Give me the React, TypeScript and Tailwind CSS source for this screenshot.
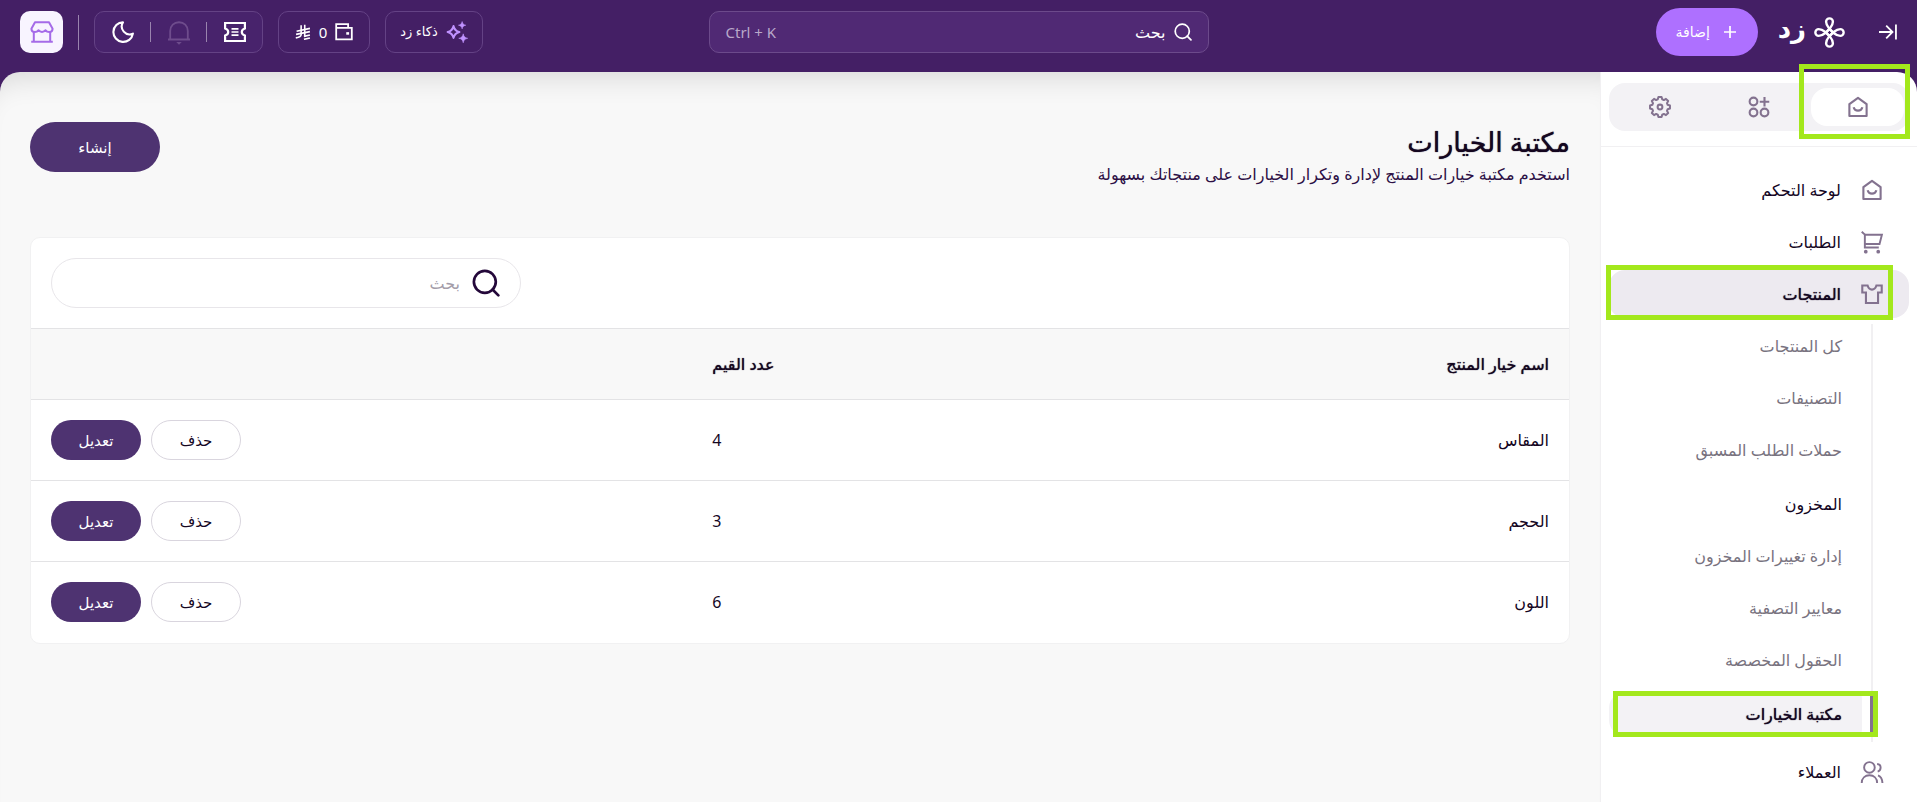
import type { ReactNode } from 'react';

type IconProps = { className?: string };

function Svg({ className, children, width = 2 }: IconProps & { children: ReactNode; width?: number }) {
  return (
    <svg
      viewBox="0 0 24 24"
      fill="none"
      stroke="currentColor"
      strokeWidth={width}
      className={className}
      aria-hidden="true"
    >
      {children}
    </svg>
  );
}

const HomeIcon = ({ className }: IconProps) => (
  <Svg className={className} width={2.3}>
    <path d="M2.6 8.8 12 2l9.400 6.800V21.800H2.600z" strokeLinejoin="round" />
    <path d="M7.200 12.200c.7 2.600 2.500 3.800 4.800 3.800s4.100-1.200 4.800-3.800" />
  </Svg>
);

const CartIcon = ({ className }: IconProps) => (
  <Svg className={className} width={2.1}>
    <path d="M.8.8 4.200 4v14h15.200" />
    <path d="M4.200 4h18.600l-2.600 10.200H4.200" />
    <circle cx="5.200" cy="22.600" r="1" fill="currentColor" />
    <circle cx="18.800" cy="22.600" r="1" fill="currentColor" />
  </Svg>
);

const ShirtIcon = ({ className }: IconProps) => (
  <Svg className={className} width={2.3}>
    <path d="M1.400 2.800h5.800c.8 2.800 2.500 4.400 4.800 4.400s4-1.600 4.800-4.400h5.800v7.600h-4v11.400H5.400V10.400h-4z" />
  </Svg>
);

const UsersIcon = ({ className }: IconProps) => (
  <Svg className={className} width={2.1}>
    <circle cx="9.200" cy="7" r="5.800" />
    <path d="M.8 24c0-5.200 3.600-8.400 8.400-8.400s8.400 3.200 8.400 8.400" />
    <path d="M17.600 3.200c2.600.2 3.800 2 3.800 4s-1.200 3.800-3.200 4.400" />
    <path d="M18.600 15.600c3.200 1.200 4.600 4.400 4.800 8.400" />
  </Svg>
);

const AppsIcon = ({ className }: IconProps) => (
  <Svg className={className} width={2.3}>
    <circle cx="6" cy="6" r="4.200" />
    <circle cx="6" cy="18" r="4.200" />
    <circle cx="18" cy="18" r="4.200" />
    <path d="M18 1v10.400M12.800 6.200h10.400" />
  </Svg>
);

const GearIcon = ({ className }: IconProps) => (
  <Svg className={className} width={2.2}>
    <path
      d="M22.860 13.720 20.360 14.400 19.610 16.220 20.900 18.470 18.470 20.900 16.220 19.610 14.400 20.360 13.720 22.860 10.280 22.860 9.600 20.360 7.780 19.610 5.530 20.900 3.100 18.470 4.390 16.220 3.640 14.400 1.140 13.720 1.140 10.280 3.640 9.600 4.390 7.780 3.100 5.530 5.530 3.100 7.780 4.390 9.600 3.640 10.280 1.140 13.720 1.140 14.400 3.640 16.220 4.390 18.470 3.100 20.900 5.530 19.610 7.780 20.360 9.600 22.860 10.280z"
      strokeLinejoin="round"
    />
    <circle cx="12" cy="12" r="2.600" />
  </Svg>
);

const SearchIcon = ({ className }: IconProps) => (
  <Svg className={className} width={2.3}>
    <circle cx="11" cy="11" r="9.400" />
    <path d="m17.600 17.600 5 5" strokeLinecap="round" />
  </Svg>
);

const CollapseIcon = ({ className }: IconProps) => (
  <Svg className={className} width={2.400}>
    <path d="M0 12h17M9.600 3.600 18 12l-8.400 8.400M22.600 2v20" />
  </Svg>
);

const StoreIcon = ({ className }: IconProps) => (
  <Svg className={className} width={2}>
    <path
      d="M5 2.200h14l3.600 6.600c0 2-1.400 3.200-3.400 3.200-1.800 0-3-.8-3.600-1.800-1 1.200-2 1.800-3.600 1.800s-2.600-.6-3.600-1.800c-.6 1-1.800 1.800-3.600 1.800-2 0-3.400-1.200-3.400-3.200z"
      strokeLinejoin="round"
    />
    <path d="M3.800 12v9.800M20.200 12v9.800M1.200 21.800h21.600" />
  </Svg>
);

const MoonIcon = ({ className }: IconProps) => (
  <Svg className={className} width={2.300}>
    <path d="M12 1.400A10.700 10.700 0 1 0 22.800 13.800 8.600 8.600 0 0 1 12 1.400z" strokeLinejoin="round" />
  </Svg>
);

const BellIcon = ({ className }: IconProps) => (
  <Svg className={className}>
    <path d="M2.400 20V11C2.400 5.200 6.600 1.400 12 1.400s9.600 3.800 9.600 9.600v9M0 20.200h24" />
    <path d="M9 23h6l-3 3z" fill="currentColor" stroke="none" />
  </Svg>
);

const TicketIcon = ({ className }: IconProps) => (
  <Svg className={className} width={2.400}>
    <path d="M1.200 2.200h21.600v6c-2.200.6-3.400 2-3.400 3.800s1.200 3.200 3.400 3.800v6H1.200v-6c2.200-.6 3.400-2 3.400-3.800s-1.200-3.200-3.400-3.800z" />
    <path d="M8.200 8.600h7.600M8.200 12h7.600M8.200 15.400h7.600" strokeWidth={1.800} />
  </Svg>
);

const WalletIcon = ({ className }: IconProps) => (
  <Svg className={className} width={2.400}>
    <path d="M1.600 6.500v15.300h20.800V6.500zM1.600 6.500V1.600h15.900v4.900" />
    <path d="M15 12.200h3.800v3.400H15z" fill="currentColor" stroke="none" />
  </Svg>
);

// Saudi riyal sign
const RiyalIcon = ({ className }: IconProps) => (
  <Svg className={className} width={2.400}>
    <path d="M9.200 2v14c0 2.400-2 3.600-8 4.800M14.600 1v18.400" />
    <path d="M2.400 10.800 22.400 6.600M1.600 15.600 22.400 11.400M13.400 18.600 22.400 16.600M13.400 23 22.400 21" />
  </Svg>
);

const SparklesIcon = ({ className }: IconProps) => (
  <Svg className={className} width={2.300}>
    <path
      d="M8.200 5.600c1 4 2.400 5.400 6.400 6.400-4 1-5.400 2.400-6.400 6.400-1-4-2.400-5.400-6.400-6.400 4-1 5.400-2.400 6.400-6.400z"
      strokeLinejoin="round"
    />
    <path
      d="M17.600.6c.6 2.600 1.400 3.400 4 4-2.600.6-3.400 1.400-4 4-.6-2.600-1.400-3.400-4-4 2.600-.6 3.400-1.400 4-4zM18.800 14c.7 3.200 1.700 4.200 4.900 4.900-3.200.7-4.200 1.700-4.900 4.900-.7-3.200-1.700-4.200-4.900-4.900 3.200-.7 4.200-1.700 4.900-4.900z"
      fill="currentColor"
      stroke="currentColor"
      strokeWidth={0.6}
    />
  </Svg>
);

const LogoMark = ({ className }: IconProps) => (
  <svg viewBox="0 0 30 30" fill="none" stroke="currentColor" strokeWidth={2.3} className={className} aria-hidden="true">
    {[0, 90, 180, 270].map((angle) => (
      <path
        key={angle}
        d="M11.500 15 15.500 11C17.400 8.600 18.300 6.600 18.300 4.600a3.300 3.300 0 0 0-6.600 0c0 2 .9 4 2.800 6.400L18.500 15"
        transform={`rotate(${angle} 15 15)`}
      />
    ))}
  </svg>
);

// Bright frame that calls out a step of the walkthrough
const Highlight = ({ className }: { className: string }) => (
  <span className={`pointer-events-none absolute z-10 border-[5px] border-[#a3e81c] ${className}`} />
);

const options = [
  { name: 'المقاس', values: 4 },
  { name: 'الحجم', values: 3 },
  { name: 'اللون', values: 6 }
];

const productLinks = [
  { label: 'كل المنتجات' },
  { label: 'التصنيفات' },
  { label: 'حملات الطلب المسبق' },
  { label: 'المخزون', heading: true },
  { label: 'إدارة تغييرات المخزون' },
  { label: 'معايير التصفية' },
  { label: 'الحقول المخصصة' },
  { label: 'مكتبة الخيارات', active: true }
];

function Header() {
  return (
    <header className="grid grid-cols-[1fr_500px_1fr] items-center h-16 px-5 text-white">
      <div className="flex items-center">
        <button aria-label="طي القائمة">
          <CollapseIcon className="w-[18px] h-[18px]" />
        </button>
        <a href="#" className="flex items-center gap-2 mr-[34px]">
          <LogoMark className="w-[31px] h-[31px]" />
          <span className="text-[26px] leading-8 font-bold pb-2">زد</span>
        </a>
        <button className="flex items-center justify-center gap-3 w-[102px] h-12 mr-5 rounded-full bg-[#ae70ff] text-sm">
          <Svg className="w-4 h-4" width={2.6}>
            <path d="M12 3v18M3 12h18" />
          </Svg>
          إضافة
        </button>
      </div>

      <label className="flex items-center gap-2 h-[42px] px-4 rounded-[10px] border border-[#6c4a8b] bg-[#502974]">
        <SearchIcon className="w-[18px] h-[18px]" />
        <input
          type="search"
          aria-label="بحث"
          placeholder="بحث"
          className="flex-1 min-w-0 text-base outline-none placeholder:text-white"
        />
        <span dir="ltr" className="text-[15px] text-[#b9a8c9]">Ctrl + K</span>
      </label>

      <div className="flex items-center justify-end gap-[15px]">
        <button className="flex items-center justify-center gap-2 w-[98px] h-[42px] rounded-[10px] border border-[#644285] text-[13px]">
          <SparklesIcon className="w-[22px] h-[22px] text-[#c092ff]" />
          ذكاء زد
        </button>
        <button className="flex items-center justify-center gap-2 w-[92px] h-[42px] rounded-[10px] border border-[#644285] text-[15px]">
          <WalletIcon className="w-[18px] h-[18px]" />
          <span>0</span>
          <RiyalIcon className="w-4 h-4" />
        </button>
        <div className="flex items-center w-[169px] h-[42px] rounded-[10px] border border-[#644285] bg-[#48236c]">
          <button aria-label="التذاكر" className="flex flex-1 justify-center">
            <TicketIcon className="w-[22px] h-[22px]" />
          </button>
          <span className="w-px h-5 bg-[#9a84ae]" />
          <button aria-label="الإشعارات" className="flex flex-1 justify-center text-[#6e4c8c]">
            <BellIcon className="w-[22px] h-[22px] overflow-visible" />
          </button>
          <span className="w-px h-5 bg-[#9a84ae]" />
          <button aria-label="الوضع الليلي" className="flex flex-1 justify-center">
            <MoonIcon className="w-[22px] h-[22px]" />
          </button>
        </div>
        <span className="w-px h-[35px] bg-[#9a84ae]" />
        <button aria-label="المتجر" className="flex items-center justify-center w-[43px] h-[42px] rounded-[10px] bg-[#f8f4ff] text-[#a56be8]">
          <StoreIcon className="w-6 h-6" />
        </button>
      </div>
    </header>
  );
}

function NavLink({ icon, label, active = false }: { icon: ReactNode; label: string; active?: boolean }) {
  return (
    <a
      href="#"
      className={`relative flex items-center gap-5 h-12 pr-[26px] rounded-2xl text-base text-[#14061f] ${
        active ? 'bg-[#edeaf0] text-shadow-[0_0_1px_#14061f]' : ''
      }`}
    >
      <span className="text-[#83728f]">{icon}</span>
      {label}
      {active && <Highlight className="right-4 -left-[3px] -top-[5px] -bottom-0.5" />}
    </a>
  );
}

function Sidebar() {
  return (
    <aside className="w-[317px] shrink-0 rounded-tr-[20px] border-l border-[#f1f0f2] bg-white">
      <div className="px-2 pt-[11px] pb-[15px] border-b border-[#f1f0f2] text-[#83728f]">
        <div className="flex gap-1.5 h-12 py-[5px] pr-[5px] pl-1 rounded-2xl bg-[#f3f2f5]">
          <button aria-label="الرئيسية" className="relative flex flex-1 items-center justify-center rounded-2xl bg-white">
            <HomeIcon className="w-[22px] h-[22px]" />
            <Highlight className="-right-1.5 -left-3 -top-6 -bottom-[13px]" />
          </button>
          <button aria-label="التطبيقات" className="flex flex-1 items-center justify-center">
            <AppsIcon className="w-[22px] h-[22px]" />
          </button>
          <button aria-label="الإعدادات" className="flex flex-1 items-center justify-center">
            <GearIcon className="w-[22px] h-[22px]" />
          </button>
        </div>
      </div>

      <nav className="px-2 pt-[19px]">
        <div className="flex flex-col gap-1">
          <NavLink icon={<HomeIcon className="w-[22px] h-[22px]" />} label="لوحة التحكم" />
          <NavLink icon={<CartIcon className="w-[22px] h-[22px] overflow-visible" />} label="الطلبات" />
          <NavLink icon={<ShirtIcon className="w-[22px] h-[22px]" />} label="المنتجات" active />
        </div>

        <ul className="flex flex-col gap-2 mt-[6px] mb-[6px] mr-9 pb-[6px] border-r-2 border-[#f1f0f2]">
          {productLinks.map((link) => (
            <li key={link.label} className={link.heading || link.active ? 'mt-0.5' : ''}>
              {link.active ? (
                <a
                  href="#"
                  className="relative flex items-center h-11 mr-[9px] pr-5 rounded-2xl rounded-r-md bg-[#f3f2f5] text-base text-[#14061f] text-shadow-[0_0_1px_#14061f]"
                >
                  {link.label}
                  <span className="absolute -right-[11px] inset-y-0 w-[3px] bg-[#83728f]" />
                  <Highlight className="-right-4 left-1 -top-px -bottom-px" />
                </a>
              ) : (
                <a
                  href="#"
                  className={`flex items-center h-11 pr-[29px] text-base ${link.heading ? 'text-[#14061f]' : 'text-[#79737f]'}`}
                >
                  {link.label}
                </a>
              )}
            </li>
          ))}
        </ul>

        <NavLink icon={<UsersIcon className="w-[22px] h-[22px] overflow-visible" />} label="العملاء" />
      </nav>
    </aside>
  );
}

function OptionsTable() {
  return (
    <table className="w-full table-fixed text-base text-[#14061f]">
      <thead>
        <tr className="h-[71px] border-y border-[#e3e3e5] bg-[#f8f8f8] text-shadow-[0_0_1px_#14061f]">
          <th className="px-5 text-right font-medium">اسم خيار المنتج</th>
          <th className="w-[14%] px-5 text-left font-medium whitespace-nowrap">عدد القيم</th>
          <th className="w-[43%]" aria-label="الإجراءات" />
        </tr>
      </thead>
      <tbody>
        {options.map((option) => (
          <tr key={option.name} className="h-[81px] border-b border-[#e3e3e5] last:border-b-0">
            <td className="px-5 text-right">{option.name}</td>
            <td className="px-5 text-left">{option.values}</td>
            <td className="px-5">
              <div className="flex justify-end gap-2.5">
                <button className="w-[90px] h-10 rounded-full border border-[#d9d5de] bg-white text-[15px]">حذف</button>
                <button className="w-[90px] h-10 rounded-full bg-[#4e3371] text-[15px] text-white">تعديل</button>
              </div>
            </td>
          </tr>
        ))}
      </tbody>
    </table>
  );
}

export default function App() {
  return (
    <div
      dir="rtl"
      className="flex flex-col gap-2 min-h-screen bg-[#441f65] font-['Noto_Sans','DejaVu_Sans',sans-serif]"
    >
      <Header />
      <div className="flex flex-1">
        <Sidebar />
        <main className="flex-1 min-w-0 px-[30px] pb-10 rounded-tl-[20px] bg-[#f8f8f8] shadow-[inset_0_30px_30px_-26px_rgba(0,0,0,0.14)]">
          <div className="flex items-start justify-between pt-[50px]">
            <div>
              <h1 className="text-[27px] leading-10 font-medium text-[#14061f] text-shadow-[0_0_1px_#14061f]">مكتبة الخيارات</h1>
              <p className="text-base leading-6 text-[#2c0f45]">
                استخدم مكتبة خيارات المنتج لإدارة وتكرار الخيارات على منتجاتك بسهولة
              </p>
            </div>
            <button className="w-[130px] h-[50px] rounded-full bg-[#4e3371] text-[15px] text-white">إنشاء</button>
          </div>

          <section className="mt-[51px] rounded-[10px] border border-[#f1f1f2] bg-white overflow-hidden">
            <div className="flex justify-end p-5">
              <label className="flex items-center gap-3 w-[470px] h-[50px] px-5 rounded-full border border-[#e8e6ea]">
                <SearchIcon className="w-7 h-7 text-[#24083a]" />
                <input
                  type="search"
                  aria-label="بحث في الخيارات"
                  placeholder="بحث"
                  className="flex-1 min-w-0 text-base outline-none placeholder:text-[#a39ca9]"
                />
              </label>
            </div>
            <OptionsTable />
          </section>
        </main>
      </div>
    </div>
  );
}
